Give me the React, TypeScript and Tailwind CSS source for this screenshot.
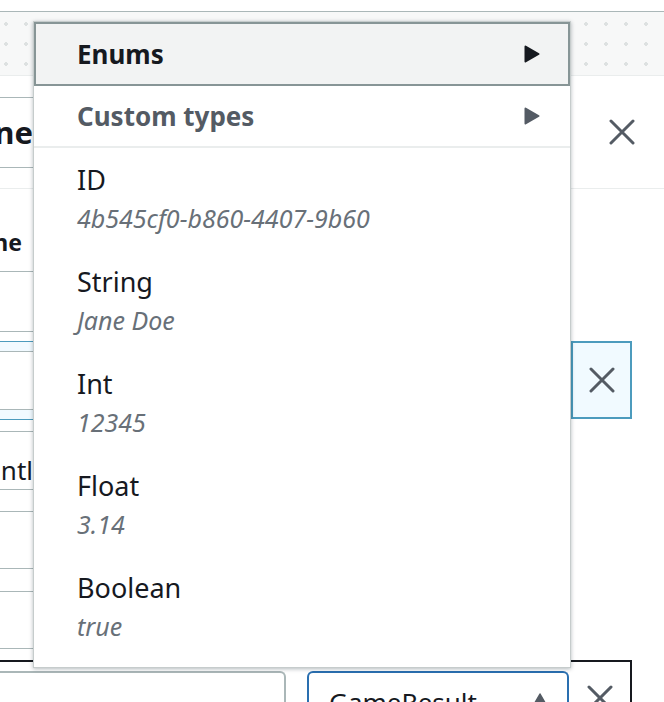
import React from "react";

const font = { fontFamily: '"Noto Sans", "Open Sans", sans-serif' };

function XIcon({ size = 26 }: { size?: number }) {
    return (
        <svg width={size} height={size} viewBox="0 0 26 26" fill="none">
            <path d="M2 2 L24 24 M24 2 L2 24" stroke="#545b64" strokeWidth="3" strokeLinecap="round" />
        </svg>
    );
}

function Caret({ color, up = false }: { color: string; up?: boolean }) {
    return up ? (
        <svg width="18" height="16" viewBox="0 0 18 16">
            <polygon points="9,1 17,15 1,15" fill={color} stroke={color} strokeWidth="1.5" strokeLinejoin="round" />
        </svg>
    ) : (
        <svg width="16" height="18" viewBox="0 0 16 18">
            <polygon points="1.5,1.5 14.5,9 1.5,16.5" fill={color} stroke={color} strokeWidth="2" strokeLinejoin="round" />
        </svg>
    );
}

const types = [
    { label: "ID", sample: "4b545cf0-b860-4407-9b60" },
    { label: "String", sample: "Jane Doe" },
    { label: "Int", sample: "12345" },
    { label: "Float", sample: "3.14" },
    { label: "Boolean", sample: "true" },
];

export default function App() {
    return (
        <div className="relative w-[664px] h-[702px] overflow-hidden bg-white text-[#16191f]" style={font}>
            {/* Canvas strip */}
            <div className="h-[11px]" />
            <div className="h-[65px] border-t border-[#aab7b8] border-b border-b-[#eaeded] bg-[#f7f8f8] bg-[radial-gradient(circle,#dde1e1_1.6px,transparent_1.8px)] bg-[size:20px_20px] bg-[position:-4px_2px]" />

            {/* Modal behind the menu */}
            <div className="flex">
                <div className="w-[33px] overflow-hidden">
                    <div className="h-[21px]" />
                    <div className="h-[70px] border-t border-[#aab7b8] flex items-center justify-end">
                        <span className="text-[31px] font-bold whitespace-nowrap leading-none">ne</span>
                    </div>
                    <div className="h-[21px] border-t border-[#aab7b8]" />
                    <div className="h-[83px] border-t border-[#eaeded] pt-[38px] pr-[11px] flex justify-end">
                        <span className="text-[23px] font-bold whitespace-nowrap leading-[30px]">ne</span>
                    </div>
                    <div className="h-[60px] border-t border-[#aab7b8]" />
                    <div className="h-[10px] border-t border-[#aab7b8]" />
                    <div className="h-[10px] border-t border-[#4c9bbd] bg-[#f1faff]" />
                    <div className="h-[58px] border-t border-[#aab7b8]" />
                    <div className="h-[10px] border-t border-[#aab7b8] bg-[#f1faff]" />
                    <div className="h-[12px] border-t border-[#4c9bbd]" />
                    <div className="h-[58px] border-t border-[#aab7b8] pt-[24px] flex justify-end">
                        <span className="text-[26px] whitespace-nowrap leading-[28px]">ntl</span>
                    </div>
                    <div className="h-[22px] border-t border-[#aab7b8]" />
                    <div className="h-[57px] border-t border-[#aab7b8]" />
                    <div className="h-[23px] border-t border-[#aab7b8]" />
                    <div className="h-[57px] border-t border-[#aab7b8]" />
                    <div className="h-[12px] border-t border-[#aab7b8]" />
                </div>
                <div className="flex-1" />
                <div className="w-[93px]">
                    <div className="h-[112px] flex items-center pl-[38px]">
                        <XIcon />
                    </div>
                    <div className="h-[153px] border-t border-[#eaeded]" />
                    <div className="h-[78px] w-[61px] border-2 border-[#4c9bbd] bg-[#f1faff] flex items-center justify-center">
                        <XIcon />
                    </div>
                </div>
            </div>

            {/* Focused row */}
            <div className="w-[632px] h-[42px] border-t-2 border-r-2 border-[#16191f] pt-[9px] flex">
                <div className="w-[286px] h-[40px] border-t-2 border-r-2 border-[#aab7b8] rounded-tr-[6px]" />
                <div className="ml-[21px] w-[262px] h-[40px] border-t-2 border-x-2 border-[#2a6fb0] rounded-t-[6px] flex items-start justify-between pl-[20px] pr-[18px] pt-[11px]">
                    <span className="text-[26px] leading-[36px]">GameResult</span>
                    <span className="pt-[9px]">
                        <Caret color="#545b64" up />
                    </span>
                </div>
                <div className="flex-1 flex justify-center pt-[14px]">
                    <XIcon />
                </div>
            </div>

            {/* Type menu */}
            <div className="absolute left-[33px] top-[21px] w-[538px] h-[647px] bg-white border border-[#c6cccc] shadow-[0_1px_4px_rgba(0,28,36,0.3)]">
                <div className="h-[64px] border-2 border-[#879596] bg-[#f2f3f3] flex items-center justify-between pl-[41px] pr-[28px]">
                    <span className="text-[26px] font-bold leading-none">Enums</span>
                    <Caret color="#16191f" />
                </div>
                <div className="h-[62px] border-b-2 border-[#eaeded] flex items-center justify-between pl-[43px] pr-[30px]">
                    <span className="text-[26px] font-bold leading-none text-[#545b64]">Custom types</span>
                    <Caret color="#545b64" />
                </div>
                {types.map((t) => (
                    <div key={t.label} className="pl-[43px] pt-[14px] pb-[17px]">
                        <div className="text-[27px] leading-[36px]">{t.label}</div>
                        <div className="mt-[5px] text-[25px] italic leading-[30px] text-[#687078]">{t.sample}</div>
                    </div>
                ))}
            </div>
        </div>
    );
}
